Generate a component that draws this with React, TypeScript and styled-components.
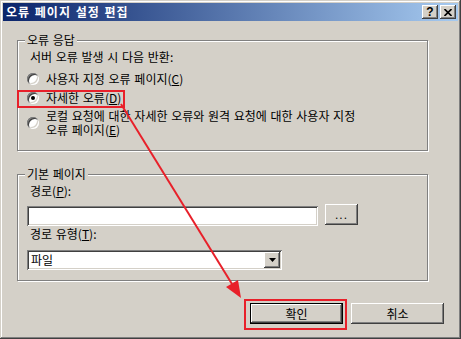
import React from 'react';
import styled, { createGlobalStyle, css } from 'styled-components';

const GlobalStyle = createGlobalStyle`
  html, body {
    margin: 0;
    padding: 0;
    background: #d4d0c8;
  }
  body {
    font-family: 'Noto Sans CJK KR', 'Noto Sans', sans-serif;
    font-size: 12px;
    word-spacing: 1px;
    color: #000;
  }
`;

const raised = css`
  background: #d4d0c8;
  box-shadow:
    inset -1px -1px #404040,
    inset 1px 1px #fff,
    inset -2px -2px #808080,
    inset 2px 2px #d4d0c8;
`;

const sunken = css`
  background: #fff;
  box-shadow:
    inset 1px 1px #808080,
    inset -1px -1px #fff,
    inset 2px 2px #404040,
    inset -2px -2px #d4d0c8;
`;

const Window = styled.div`
  position: relative;
  box-sizing: border-box;
  width: 461px;
  height: 339px;
  padding: 3px;
  display: flex;
  flex-direction: column;
  background: #d4d0c8;
  box-shadow:
    inset -1px -1px #404040,
    inset 1px 1px #d4d0c8,
    inset -2px -2px #808080,
    inset 2px 2px #fff;
`;

const TitleBar = styled.div`
  height: 18px;
  display: flex;
  align-items: center;
  padding: 0 2px 0 3px;
  background: linear-gradient(to right, #0a246a, #a6caf0);
`;

const TitleText = styled.span`
  flex: 1;
  color: #fff;
  font-weight: bold;
  letter-spacing: 1px;
  line-height: 18px;
`;

const CaptionButton = styled.div`
  ${raised}
  box-sizing: border-box;
  width: 16px;
  height: 14px;
  display: flex;
  align-items: center;
  justify-content: center;
  font: bold 12px 'Liberation Sans', sans-serif;
  & + & {
    margin-left: 2px;
  }
`;

const Body = styled.div`
  flex: 1;
  display: flex;
  flex-direction: column;
  align-items: flex-start;
  padding: 12px 14px 0 14px;
`;

const Group = styled.fieldset<{ $top?: number }>`
  box-sizing: border-box;
  width: 411px;
  margin: ${(p) => p.$top ?? 0}px 0 0;
  padding: 0;
  border: 1px solid #808080;
  box-shadow:
    inset 1px 1px #fff,
    1px 1px #fff;
`;

const GroupTitle = styled.legend`
  margin-left: 7px;
  padding: 0 2px;
  line-height: 14px;
  background: #d4d0c8;
`;

const GroupBody = styled.div<{ $bottom: number }>`
  display: flex;
  flex-direction: column;
  align-items: flex-start;
  padding: 3px 0 ${(p) => p.$bottom}px 9px;
`;

const Caption = styled.div<{ $top?: number }>`
  margin: ${(p) => p.$top ?? 0}px 0 0 3px;
  line-height: 14px;
`;

const Option = styled.div<{ $top: number; $marked?: boolean }>`
  position: relative;
  display: flex;
  align-items: center;
  gap: 7px;
  margin-top: ${(p) => p.$top}px;
  line-height: 14px;
  ${(p) =>
    p.$marked &&
    css`
      &::after {
        content: '';
        position: absolute;
        top: -1px;
        bottom: -3px;
        left: -10px;
        right: -4px;
        border: 2px solid #e8202a;
      }
    `}
`;

const Radio = styled.span<{ $checked?: boolean }>`
  position: relative;
  flex: none;
  width: 12px;
  height: 12px;
  border-radius: 50%;
  background: #fff;
  box-shadow:
    inset 1px 1px #808080,
    inset -1px -1px #fff,
    inset 2px 2px #404040,
    inset -2px -2px #d4d0c8;
  ${(p) =>
    p.$checked &&
    css`
      &::after {
        content: '';
        position: absolute;
        left: 4px;
        top: 4px;
        width: 4px;
        height: 4px;
        border-radius: 50%;
        background: #000;
      }
    `}
`;

const FieldRow = styled.div`
  display: flex;
  align-items: flex-start;
  gap: 7px;
  margin-top: 6px;
`;

const TextBox = styled.div<{ $width: number }>`
  ${sunken}
  box-sizing: border-box;
  width: ${(p) => p.$width}px;
  height: 20px;
  margin-top: 2px;
`;

const SmallButton = styled.div`
  ${raised}
  box-sizing: border-box;
  width: 33px;
  height: 21px;
  display: flex;
  align-items: center;
  justify-content: center;
  font-family: 'Liberation Sans', sans-serif;
  letter-spacing: 1px;
`;

const Select = styled.div`
  ${sunken}
  box-sizing: border-box;
  width: 255px;
  height: 20px;
  margin-top: 9px;
  padding: 2px;
  display: flex;
  align-items: center;
`;

const SelectValue = styled.span`
  flex: 1;
  padding-left: 2px;
  line-height: 16px;
`;

const DropButton = styled.span`
  ${raised}
  width: 16px;
  height: 16px;
  display: flex;
  align-items: center;
  justify-content: center;
`;

const ButtonRow = styled.div`
  align-self: stretch;
  display: flex;
  justify-content: flex-end;
  gap: 8px;
  margin-top: 22px;
`;

const DialogButton = styled.button<{ $default?: boolean; $marked?: boolean }>`
  ${raised}
  position: relative;
  box-sizing: border-box;
  width: 93px;
  height: 21px;
  padding: 0;
  border: ${(p) => (p.$default ? '1px solid #000' : 'none')};
  font: inherit;
  word-spacing: inherit;
  color: #000;
  ${(p) =>
    p.$marked &&
    css`
      &::after {
        content: '';
        position: absolute;
        top: -5px;
        right: -5px;
        bottom: -7px;
        left: -7px;
        border: 2px solid #e8202a;
      }
    `}
`;

const Annotation = styled.svg`
  position: absolute;
  left: 0;
  top: 0;
  pointer-events: none;
`;

export default function App() {
  return (
    <>
      <GlobalStyle />
      <Window>
        <TitleBar>
          <TitleText>오류 페이지 설정 편집</TitleText>
          <CaptionButton>?</CaptionButton>
          <CaptionButton>
            <svg width="8" height="7" viewBox="0 0 8 7">
              <path d="M0.5 0 L7.5 7 M7.5 0 L0.5 7" stroke="#000" strokeWidth="1.6" />
            </svg>
          </CaptionButton>
        </TitleBar>
        <Body>
          <Group>
            <GroupTitle>오류 응답</GroupTitle>
            <GroupBody $bottom={13}>
              <Caption>서버 오류 발생 시 다음 반환:</Caption>
              <Option $top={8}>
                <Radio />
                <span>
                  사용자 지정 오류 페이지(<u>C</u>)
                </span>
              </Option>
              <Option $top={5} $marked>
                <Radio $checked />
                <span>
                  자세한 오류(<u>D</u>)
                </span>
              </Option>
              <Option $top={4}>
                <Radio />
                <span>
                  로컬 요청에 대한 자세한 오류와 원격 요청에 대한 사용자 지정
                  <br />
                  오류 페이지(<u>E</u>)
                </span>
              </Option>
            </GroupBody>
          </Group>
          <Group $top={16}>
            <GroupTitle>기본 페이지</GroupTitle>
            <GroupBody $bottom={10}>
              <Caption>
                경로(<u>P</u>):
              </Caption>
              <FieldRow>
                <TextBox $width={291} />
                <SmallButton>...</SmallButton>
              </FieldRow>
              <Caption $top={1}>
                경로 유형(<u>T</u>):
              </Caption>
              <Select>
                <SelectValue>파일</SelectValue>
                <DropButton>
                  <svg width="7" height="4" viewBox="0 0 7 4">
                    <path d="M0 0 H7 L3.5 4 Z" fill="#000" />
                  </svg>
                </DropButton>
              </Select>
            </GroupBody>
          </Group>
          <ButtonRow>
            <DialogButton $default $marked>
              확인
            </DialogButton>
            <DialogButton>취소</DialogButton>
          </ButtonRow>
        </Body>
        <Annotation width="461" height="339" viewBox="0 0 461 339">
          <line x1="121" y1="104" x2="232" y2="284" stroke="#e8202a" strokeWidth="2" />
          <polygon points="241,298 226,287 238,280" fill="#e8202a" />
        </Annotation>
      </Window>
    </>
  );
}
